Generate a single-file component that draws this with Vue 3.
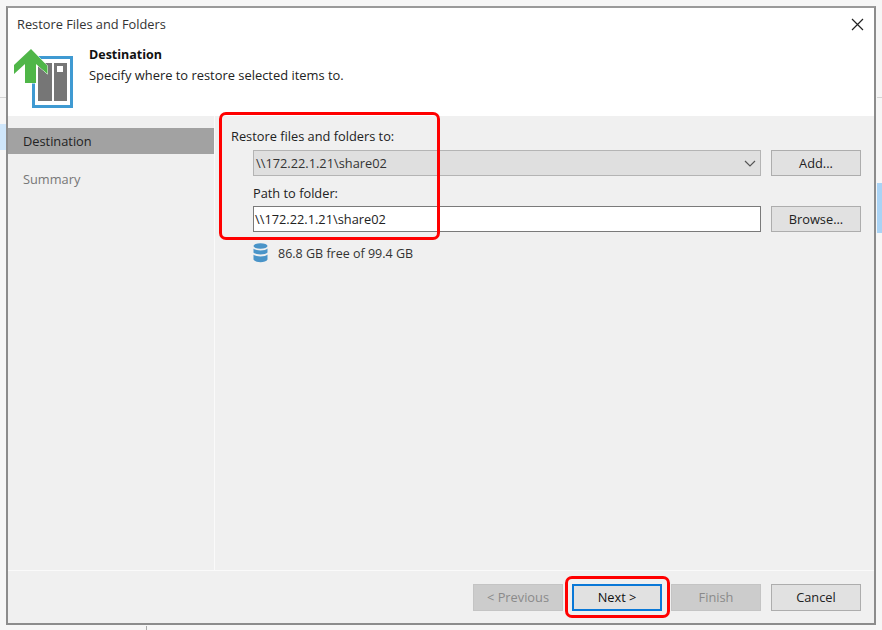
<script setup>
const steps = [
  { label: 'Destination', active: true },
  { label: 'Summary', active: false }
]
const footerButtons = [
  { label: '< Previous', kind: 'disabled' },
  { label: 'Next >', kind: 'focused' },
  { label: 'Finish', kind: 'disabled' },
  { label: 'Cancel', kind: '' }
]
</script>

<template>
  <div class="screen">
    <div class="back-line back-left"></div>
    <div class="back-line back-right"></div>
    <div class="back-blue blue-left"></div>
    <div class="back-blue blue-right"></div>
    <div class="back-tick"></div>

    <div class="window">
      <header class="header">
        <div class="titlebar">
          <span class="title">Restore Files and Folders</span>
          <svg class="close" width="13" height="13" viewBox="0 0 13 13">
            <path d="M1 1 L12 12 M12 1 L1 12" stroke="#222" stroke-width="1.2" fill="none" />
          </svg>
        </div>
        <div class="intro">
          <svg class="logo" width="62" height="62" viewBox="0 0 62 62">
            <rect x="19.5" y="8.5" width="38" height="49" fill="#fff" stroke="#3f9ad2" stroke-width="3" />
            <rect x="24" y="14" width="14" height="38" fill="#767676" />
            <rect x="40" y="14" width="13" height="38" fill="#767676" />
            <rect x="43" y="17" width="6" height="6" fill="#fff" />
            <path d="M17 0 L33.5 17 V25 L22 15 V34 H11 V15 L0 25 V16 Z" fill="#4fb648" stroke="#fff" stroke-width="1" paint-order="stroke" />
          </svg>
          <div class="intro-text">
            <div class="intro-title">Destination</div>
            <div class="intro-sub">Specify where to restore selected items to.</div>
          </div>
        </div>
      </header>

      <div class="main">
        <nav class="sidebar">
          <div
            v-for="step in steps"
            :key="step.label"
            class="step"
            :class="{ active: step.active }"
          >{{ step.label }}</div>
        </nav>

        <section class="content">
          <div class="field-label first">Restore files and folders to:</div>
          <div class="row">
            <div class="select">
              <span>\\172.22.1.21\share02</span>
              <svg width="12" height="7" viewBox="0 0 12 7">
                <path d="M1 1 L6 6 L11 1" stroke="#555" stroke-width="1.2" fill="none" />
              </svg>
            </div>
            <button class="btn side">Add...</button>
          </div>
          <div class="field-label second">Path to folder:</div>
          <div class="row">
            <div class="input">\\172.22.1.21\share02</div>
            <button class="btn side">Browse...</button>
          </div>
          <div class="free">
            <svg width="15" height="20" viewBox="0 0 15 20">
              <g fill="#4a94c8">
                <ellipse cx="7.5" cy="3" rx="7" ry="2.8" />
                <path d="M0.5 5.5 C2 8 13 8 14.5 5.5 V9.5 C13 12 2 12 0.5 9.5 Z" />
                <path d="M0.5 11.5 C2 14 13 14 14.5 11.5 V16.5 C13 20 2 20 0.5 16.5 Z" />
              </g>
            </svg>
            <span>86.8 GB free of 99.4 GB</span>
          </div>
        </section>
      </div>

      <footer class="footer">
        <button
          v-for="b in footerButtons"
          :key="b.label"
          class="btn foot"
          :class="b.kind"
        >{{ b.label }}</button>
      </footer>
    </div>

    <div class="mark mark-fields"></div>
    <div class="mark mark-next"></div>
  </div>
</template>

<style>
html, body { margin: 0; background: #fff; }
</style>

<style scoped>
.screen {
  position: relative;
  width: 882px;
  height: 630px;
  overflow: hidden;
  box-sizing: border-box;
  padding: 6px 6px 5px 6px;
  background: #f6f6f6;
  font-family: "Open Sans", "Noto Sans", sans-serif;
  font-size: 12.8px;
  color: #222;
}
.back-line { position: absolute; height: 1px; background: #d4d4d4; top: 97px; }
.back-left { left: 0; width: 6px; }
.back-right { left: 877px; width: 5px; }
.back-blue { position: absolute; background: #cfe6fa; }
.blue-left { left: 0; top: 124px; width: 6px; height: 26px; }
.blue-right { left: 877px; top: 183px; width: 5px; height: 50px; background: #a9d3f5; }
.back-tick { position: absolute; left: 146px; top: 626px; width: 1px; height: 4px; background: #aaa; }

.window {
  position: relative;
  box-sizing: border-box;
  width: 870px;
  height: 619px;
  border: 2px solid #8c8c8c;
  border-top-color: #9a9a9a;
  background: #f0f0f0;
  display: flex;
  flex-direction: column;
}
.header { height: 108px; background: #fff; flex: none; box-sizing: border-box; padding: 0 10px 0 9px; }
.titlebar { display: flex; justify-content: space-between; align-items: center; height: 32px; }
.title { font-size: 12.8px; color: #333; }
.intro { display: flex; gap: 13px; margin-left: -3px; }
.logo { flex: none; margin-top: 9px; }
.intro-text { padding-top: 6px; }
.intro-title { font-weight: 700; font-size: 12.5px; line-height: 17px; color: #111; }
.intro-sub { line-height: 24px; font-size: 12.9px; color: #222; }

.main { flex: 1; display: flex; min-height: 0; }
.sidebar {
  width: 206px;
  flex: none;
  padding-top: 12px;
  border-right: 1px solid #fafafa;
}
.step { height: 26px; line-height: 27px; padding-left: 15px; color: #777; margin-bottom: 12px; }
.step.active { background: #a2a2a2; color: #222; }
.content { flex: 1; padding: 11px 13px 0 16px; }
.field-label { line-height: 18px; color: #222; }
.field-label.second { margin: 8px 0 4px 22px; }
.field-label.first { margin-bottom: 5px; }
.row { display: flex; gap: 10px; padding-left: 22px; align-items: stretch; }
.select, .input {
  box-sizing: border-box;
  width: 508px;
  height: 26px;
  display: flex;
  align-items: center;
  white-space: nowrap;
}
.select {
  background: #dfdfdf;
  border: 1px solid #b4b4b4;
  padding: 0 4px 0 2px;
  justify-content: space-between;
  color: #333;
}
.input { background: #fff; border: 1px solid #7a7a7a; padding: 0 1px; color: #222; }
.btn {
  box-sizing: border-box;
  font: inherit;
  background: #e1e1e1;
  border: 1px solid #adadad;
  color: #222;
  padding: 0;
}
.btn.side { width: 90px; height: 26px; }
.free { display: flex; align-items: center; gap: 10px; margin: 11px 0 0 22px; color: #333; font-size: 12.5px; }

.footer {
  height: 53px;
  flex: none;
  border-top: 1px solid #fafafa;
  box-sizing: border-box;
  display: flex;
  justify-content: flex-end;
  gap: 9px;
  padding: 13px 13px 0 0;
}
.btn.foot { width: 90px; height: 27px; padding-bottom: 2px; }
.btn.foot:last-child { margin-left: 1px; }
.btn.disabled { background: #cccccc; border-color: #c4c4c4; color: #8a8a8a; }
.btn.focused { border: 2px solid #0a78d7; color: #111; }

.mark { position: absolute; border: 3px solid #f00; border-radius: 7px; box-sizing: border-box; }
.mark-fields { left: 219px; top: 112px; width: 221px; height: 128px; }
.mark-next { left: 565px; top: 576px; width: 105px; height: 42px; }
</style>
